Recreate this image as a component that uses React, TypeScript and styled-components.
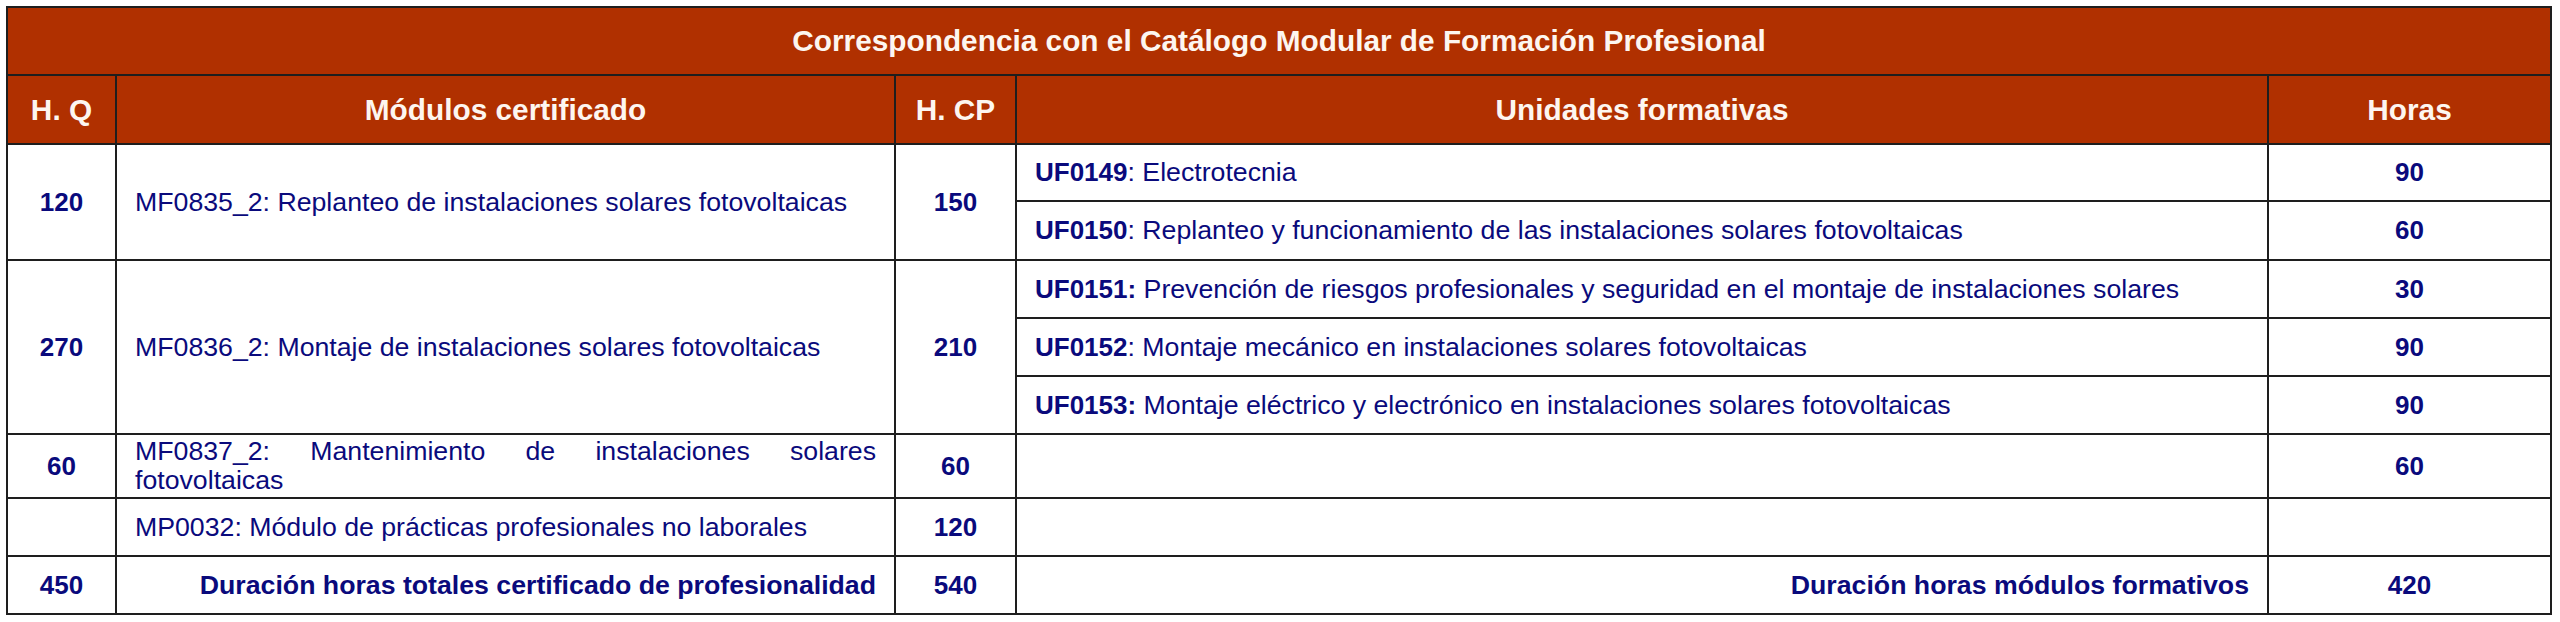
import React from "react";
import styled, { createGlobalStyle } from "styled-components";

const RUST = "#b03000";
const NAVY = "#0a0a7c";
const LINE = "#1e1e1e";

type Unit = { code: string; colonBold?: boolean; name: string; hours: string };

type Module = {
  hq: string;
  title: string;
  justify?: boolean;
  hcp: string;
  units: Unit[];
  hours?: string;
  height?: number;
};

const MODULES: Module[] = [
  {
    hq: "120",
    title: "MF0835_2: Replanteo de instalaciones solares fotovoltaicas",
    hcp: "150",
    units: [
      { code: "UF0149", name: "Electrotecnia", hours: "90" },
      {
        code: "UF0150",
        name: "Replanteo y funcionamiento de las instalaciones solares fotovoltaicas",
        hours: "60",
      },
    ],
  },
  {
    hq: "270",
    title: "MF0836_2: Montaje de instalaciones solares fotovoltaicas",
    hcp: "210",
    units: [
      {
        code: "UF0151",
        colonBold: true,
        name: "Prevención de riesgos profesionales y seguridad en el montaje de instalaciones solares",
        hours: "30",
      },
      {
        code: "UF0152",
        name: "Montaje mecánico en instalaciones solares fotovoltaicas",
        hours: "90",
      },
      {
        code: "UF0153",
        colonBold: true,
        name: "Montaje eléctrico y electrónico en instalaciones solares fotovoltaicas",
        hours: "90",
      },
    ],
  },
  {
    hq: "60",
    title: "MF0837_2: Mantenimiento de instalaciones solares fotovoltaicas",
    justify: true,
    hcp: "60",
    units: [],
    hours: "60",
    height: 64,
  },
  {
    hq: "",
    title: "MP0032: Módulo de prácticas profesionales no laborales",
    hcp: "120",
    units: [],
    hours: "",
  },
];

const UNIT_HEIGHTS: Record<string, number> = {
  UF0149: 57,
  UF0150: 59,
};

export default function App() {
  return (
    <>
      <GlobalStyle />
      <Page>
        <Table>
          <colgroup>
            <col style={{ width: 109 }} />
            <col style={{ width: 779 }} />
            <col style={{ width: 121 }} />
            <col style={{ width: 1252 }} />
            <col style={{ width: 283 }} />
          </colgroup>
          <thead>
            <tr>
              <TitleCell colSpan={5}>
                Correspondencia con el Catálogo Modular de Formación Profesional
              </TitleCell>
            </tr>
            <tr>
              <HeadCell>H. Q</HeadCell>
              <HeadCell>Módulos certificado</HeadCell>
              <HeadCell>H. CP</HeadCell>
              <HeadCell>Unidades formativas</HeadCell>
              <HeadCell>Horas</HeadCell>
            </tr>
          </thead>
          <tbody>
            {MODULES.map((mod) => {
              const span = Math.max(mod.units.length, 1);
              if (mod.units.length === 0) {
                return (
                  <tr key={mod.title}>
                    <NumCell $h={mod.height ?? 58}>{mod.hq}</NumCell>
                    <TextCell $align={mod.justify ? "justify" : "left"}>
                      {mod.title}
                    </TextCell>
                    <NumCell>{mod.hcp}</NumCell>
                    <TextCell />
                    <NumCell>{mod.hours}</NumCell>
                  </tr>
                );
              }
              return mod.units.map((u, i) => (
                <tr key={u.code}>
                  {i === 0 && (
                    <>
                      <NumCell rowSpan={span}>{mod.hq}</NumCell>
                      <TextCell rowSpan={span}>{mod.title}</TextCell>
                      <NumCell rowSpan={span}>{mod.hcp}</NumCell>
                    </>
                  )}
                  <TextCell $h={UNIT_HEIGHTS[u.code] ?? 58} $thin={u.code === "UF0149"}>
                    <Code>
                      {u.code}
                      {u.colonBold && ":"}
                    </Code>
                    {!u.colonBold && ":"} {u.name}
                  </TextCell>
                  <NumCell $thin={u.code === "UF0149"}>{u.hours}</NumCell>
                </tr>
              ));
            })}
            <tr>
              <NumCell $h={58}>450</NumCell>
              <TextCell $align="right" $bold>
                Duración horas totales certificado de profesionalidad
              </TextCell>
              <NumCell>540</NumCell>
              <TextCell $align="right" $bold>
                Duración horas módulos formativos
              </TextCell>
              <NumCell>420</NumCell>
            </tr>
          </tbody>
        </Table>
      </Page>
    </>
  );
}

const GlobalStyle = createGlobalStyle`
  html, body {
    margin: 0;
    padding: 0;
    background: #ffffff;
  }
  body {
    font-family: "Liberation Sans", Arial, sans-serif;
  }
`;

const Page = styled.div`
  padding: 6px 10px 0 6px;
`;

const Table = styled.table`
  width: 2544px;
  table-layout: fixed;
  border-collapse: collapse;
  border: 2px solid ${LINE};

  td,
  th {
    border: 2px solid ${LINE};
    vertical-align: middle;
  }
`;

const TitleCell = styled.th`
  height: 66px;
  padding: 0;
  background: ${RUST};
  color: #fdf6f0;
  font-size: 29.8px;
  font-weight: 700;
  text-align: center;
`;

const HeadCell = styled.th`
  height: 67px;
  padding: 0;
  background: ${RUST};
  color: #fdf6f0;
  font-size: 29.8px;
  font-weight: 700;
  text-align: center;
`;

const NumCell = styled.td<{ $h?: number; $thin?: boolean }>`
  ${(p) => (p.$h ? `height: ${p.$h - 2}px;` : "")}
  padding: 0;
  color: ${NAVY};
  font-size: 26px;
  font-weight: 700;
  text-align: center;
  ${(p) => (p.$thin ? `border-bottom-width: 1px !important;` : "")}
`;

const TextCell = styled.td<{
  $align?: "left" | "right" | "justify";
  $bold?: boolean;
  $h?: number;
  $thin?: boolean;
}>`
  ${(p) => (p.$h ? `height: ${p.$h - 2}px;` : "")}
  padding: 0 18px 0 18px;
  color: ${NAVY};
  font-size: 26.7px;
  line-height: 29px;
  font-weight: ${(p) => (p.$bold ? 700 : 400)};
  text-align: ${(p) => p.$align ?? "left"};
  ${(p) => (p.$thin ? `border-bottom-width: 1px !important;` : "")}
`;

const Code = styled.strong`
  font-size: 26px;
  font-weight: 700;
`;
